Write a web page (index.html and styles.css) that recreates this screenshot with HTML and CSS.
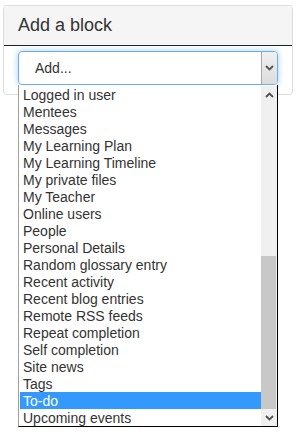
FILE: index.html
```html
<!DOCTYPE html>
<html lang="en">
<head>
    <meta charset="UTF-8">
    <meta name="viewport" content="width=device-width, initial-scale=1.0">
    <title>Add a block</title>
    <link rel="stylesheet" href="styles.css">
</head>
<body>
    <div class="block">
        <div class="block-header">Add a block</div>
        <div class="block-body">
            <div class="picker">
                <div class="picker-box">
                    <span class="picker-value">Add...</span>
                    <span class="picker-button">
                        <svg width="9" height="6" viewBox="0 0 9 6"><path d="M1 1l3.5 3.5L8 1" fill="none" stroke="#555" stroke-width="1.8"/></svg>
                    </span>
                </div>

                <!-- open dropdown, hangs over the card edge -->
                <div class="picker-list">
                    <ul class="options">
                        <li>Logged in user</li>
                        <li>Mentees</li>
                        <li>Messages</li>
                        <li>My Learning Plan</li>
                        <li>My Learning Timeline</li>
                        <li>My private files</li>
                        <li>My Teacher</li>
                        <li>Online users</li>
                        <li>People</li>
                        <li>Personal Details</li>
                        <li>Random glossary entry</li>
                        <li>Recent activity</li>
                        <li>Recent blog entries</li>
                        <li>Remote RSS feeds</li>
                        <li>Repeat completion</li>
                        <li>Self completion</li>
                        <li>Site news</li>
                        <li>Tags</li>
                        <li class="selected">To-do</li>
                        <li>Upcoming events</li>
                    </ul>
                    <div class="scrollbar">
                        <span class="scroll-arrow">
                            <svg width="9" height="6" viewBox="0 0 9 6"><path d="M1 5l3.5-3.5L8 5" fill="none" stroke="#505050" stroke-width="1.8"/></svg>
                        </span>
                        <span class="scroll-track"><span class="scroll-thumb"></span></span>
                        <span class="scroll-arrow">
                            <svg width="9" height="6" viewBox="0 0 9 6"><path d="M1 1l3.5 3.5L8 1" fill="none" stroke="#505050" stroke-width="1.8"/></svg>
                        </span>
                    </div>
                </div>
            </div>
        </div>
    </div>
</body>
</html>
```

FILE: styles.css
```css
html, body {
    min-height: 100vh;
}
body {
    margin: 0;
    padding-top: 5px;
    box-sizing: border-box;
    background-color: #ffffff;
    font-family: "Liberation Sans", Arial, sans-serif;
    color: #333333;
}
.block {
    margin: 0 4px 0 3px;
    border: 1px solid #dddddd;
    border-radius: 4px;
    background-color: #ffffff;
}
.block-header {
    height: 39px;
    padding-left: 14px;
    background-color: #f5f5f5;
    border-bottom: 1px solid #222222;
    border-radius: 4px 4px 0 0;
    font-size: 18px;
    line-height: 38px;
}
.block-body {
    padding: 5px 14px 9px 14px;
}
.picker {
    position: relative;
}
.picker-box {
    height: 32px;
    display: flex;
    align-items: stretch;
    border: 1px solid #66afe9;
    border-radius: 4px;
    box-shadow: 0 0 6px rgba(102, 175, 233, 0.6);
}
.picker-value {
    flex: 1;
    padding-left: 16px;
    font-size: 14px;
    line-height: 33px;
}
.picker-button {
    width: 15px;
    display: flex;
    align-items: center;
    justify-content: center;
    background: linear-gradient(#f0f0f0, #dcdcdc);
    border-left: 1px solid #a9a9a9;
    border-radius: 0 3px 3px 0;
}
.picker-list {
    position: absolute;
    top: 34px;
    left: 0;
    width: 258px;
    display: flex;
    padding-top: 1px;
    background-color: #ffffff;
    border-right: 1px solid #000000;
    border-bottom: 1px solid #000000;
    border-left: 1px solid #a0a0a0;
}
.options {
    flex: 1;
    margin: 0;
    padding: 0 0 0 1px;
    list-style: none;
    font-size: 14px;
}
.options li {
    height: 17px;
    padding-left: 3px;
    line-height: 18px;
    white-space: nowrap;
}
.options .selected {
    background-color: #3399ff;
    color: #ffffff;
}
.scrollbar {
    width: 16px;
    display: flex;
    flex-direction: column;
    background-color: #f0f0f0;
}
.scroll-arrow {
    height: 17px;
    display: flex;
    align-items: center;
    justify-content: center;
}
.scroll-track {
    flex: 1;
    display: flex;
    flex-direction: column;
    justify-content: flex-end;
}
.scroll-thumb {
    height: 153px;
    margin-right: 1px;
    background-color: #c8c8c8;
}
```
